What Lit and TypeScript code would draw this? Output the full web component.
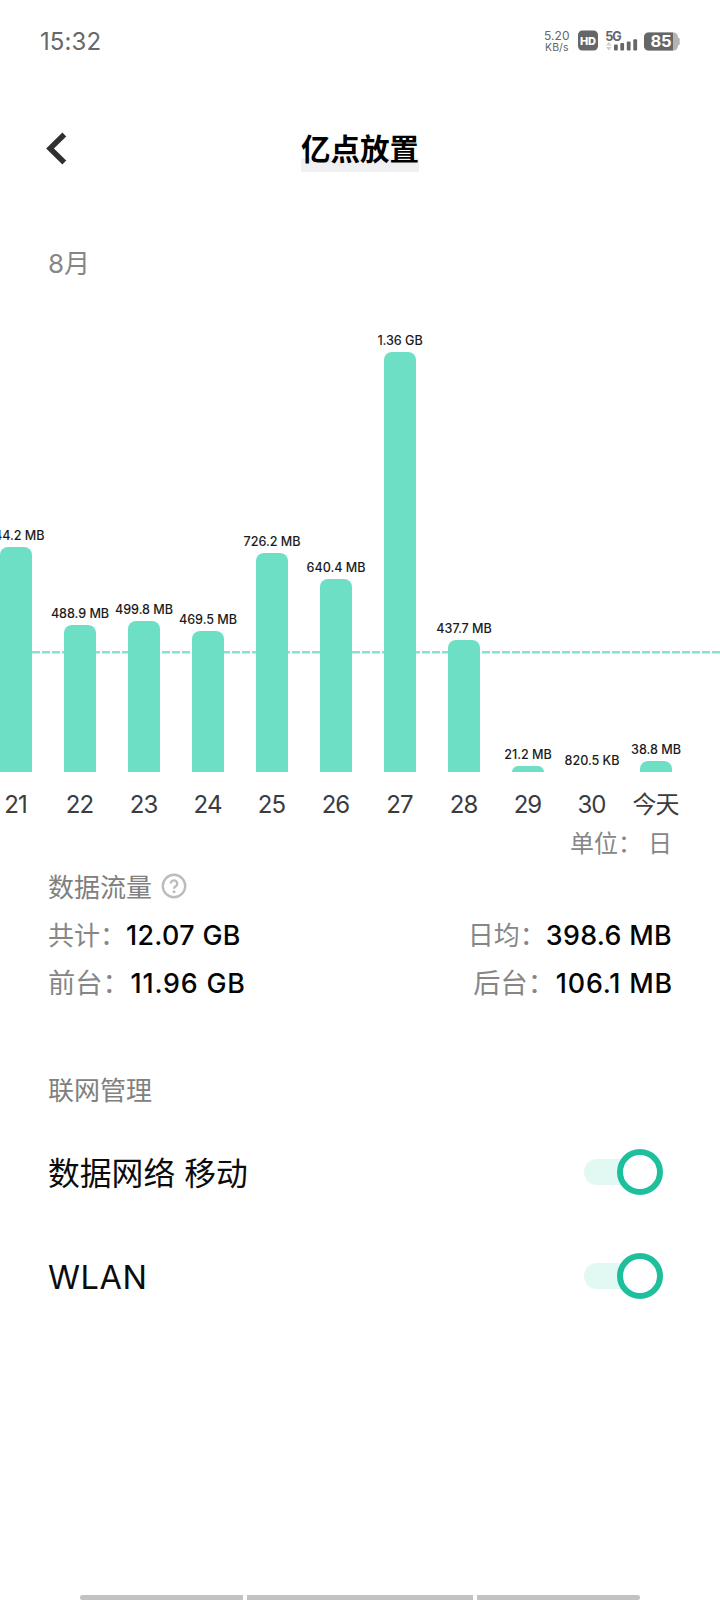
import { LitElement, html, css, svg } from "lit";
import { customElement, property } from "lit/decorators.js";

interface Day {
  day: string;
  usage: string;
  height: number;
}

const DAYS: Day[] = [
  { day: "21", usage: "744.2 MB", height: 225 },
  { day: "22", usage: "488.9 MB", height: 147.5 },
  { day: "23", usage: "499.8 MB", height: 151 },
  { day: "24", usage: "469.5 MB", height: 141.5 },
  { day: "25", usage: "726.2 MB", height: 219.5 },
  { day: "26", usage: "640.4 MB", height: 193.5 },
  { day: "27", usage: "1.36 GB", height: 420 },
  { day: "28", usage: "437.7 MB", height: 132 },
  { day: "29", usage: "21.2 MB", height: 6 },
  { day: "30", usage: "820.5 KB", height: 0 },
  { day: "今天", usage: "38.8 MB", height: 11.5 },
];

@customElement("status-bar")
class StatusBar extends LitElement {
  static styles = css`
    :host {
      display: flex;
      align-items: center;
      justify-content: space-between;
      height: 82px;
      padding: 0 40px;
      color: #686868;
    }
    .time { font-size: 24px; line-height: 30px; letter-spacing: 0.1px; padding: 2px 0 0 0; }
    .icons { display: block; font-family: "Inter", sans-serif; }
  `;
  render() {
    return html`
      <span class="time">15:32</span>
      <svg class="icons" width="138" height="26" viewBox="542 27.5 138 26" fill="#666">
        <text x="544" y="39.2" font-size="12" textLength="25.5">5.20</text>
        <text x="545" y="50" font-size="10.5" textLength="23.5">KB/s</text>
        <rect x="578" y="30" width="20" height="20" rx="4.5" />
        <text x="580" y="44.2" font-size="11" font-weight="800" fill="#fff" textLength="16">HD</text>
        <text x="605.3" y="40" font-size="12.6" font-weight="700" textLength="16.5">5G</text>
        <path d="M606 45l2.8-3.5 2.8 3.5zM606 46.5l2.8 3.5 2.8-3.5z" fill="#ccc" />
        ${[[614, 6], [620.3, 7.5], [626.8, 9], [633.3, 11.2]].map(
          ([x, h]) => svg`<rect x=${x} y=${50 - h} width="3.8" height=${h} rx="1" />`
        )}
        <rect x="644" y="32" width="34" height="18" rx="4.5" fill="#b4b4b4" />
        <rect x="676" y="37" width="3.7" height="8" rx="1.8" fill="#b4b4b4" />
        <path d="M648.5 32H673v18h-24.500a4.500 4.500 0 0 1-4.500-4.500v-9a4.500 4.500 0 0 1 4.500-4.500z" />
        <text x="650.6" y="46.9" font-size="16.5" font-weight="700" fill="#fff" textLength="21">85</text>
      </svg>
    `;
  }
}

@customElement("usage-chart")
class UsageChart extends LitElement {
  static styles = css`
    :host { display: block; overflow: hidden; }
    .plot {
      display: grid;
      grid-template-columns: repeat(11, 64px);
      margin-left: -16px;
      width: 736px;
      height: 472px;
      background: repeating-linear-gradient(90deg, #86e3d0 0 5.7px, transparent 5.7px 8px, #86e3d0 8px 10px) 0 351px / 100% 2.5px no-repeat;
    }
    .col { display: flex; flex-direction: column; align-items: center; justify-content: flex-end; }
    .usage {
      font-size: 12.6px;
      font-weight: 500;
      line-height: 16px;
      margin-bottom: 3px;
      white-space: nowrap;
      color: #1c1c1c;
      letter-spacing: -0.05px;
    }
    .bar { width: 32px; flex: none; background: #6cdfc5; border-radius: 8px 8px 0 0; }
    .days { display: grid; grid-template-columns: repeat(11, 64px); margin-left: -16px; }
    .day { text-align: center; font-size: 24px; line-height: 32px; padding: 17px 1px 0 0; color: #3c3c3c; letter-spacing: -0.9px; }
  `;
  render() {
    return html`
      <div class="plot">
        ${DAYS.map(
          (d) => html`<div class="col">
            <span class="usage">${d.usage}</span>
            <div class="bar" style="height:${d.height}px"></div>
          </div>`
        )}
      </div>
      <div class="days">${DAYS.map((d) => html`<span class="day">${d.day}</span>`)}</div>
    `;
  }
}

@customElement("toggle-row")
class ToggleRow extends LitElement {
  @property() label = "";
  static styles = css`
    :host { display: flex; align-items: center; justify-content: space-between; height: 104px; padding: 0 57px 0 48px; }
    .label { font-size: 32px; line-height: 40px; color: #0c0c0c; padding-top: 4px; }
    .label:lang(zh) { font-size: 31.8px; }
    .label:lang(en) { font-size: 32.5px; letter-spacing: 0.6px; }
    .switch { display: flex; align-items: center; }
    .track { width: 44px; height: 26px; border-radius: 13px 0 0 13px; background: #e2f9f3; }
    .knob { box-sizing: border-box; width: 46px; height: 46px; margin-left: -11px; border: 6px solid #1dbf9d; border-radius: 50%; background: #fff; }
  `;
  render() {
    return html`
      <span class="label">${this.label}</span>
      <span class="switch"><span class="track"></span><span class="knob"></span></span>
    `;
  }
}

@customElement("app-root")
class AppRoot extends LitElement {
  static styles = css`
    :host {
      display: flex;
      flex-direction: column;
      width: 720px;
      height: 1600px;
      overflow: hidden;
      background: #fff;
      font-family: "Inter", "Noto Sans CJK SC", sans-serif;
    }
    .header { display: grid; grid-template-columns: 140px 1fr 140px; align-items: center; height: 134px; }
    .back { margin-left: 44px; }
    .title {
      justify-self: center;
      font-size: 29.5px;
      font-weight: 600;
      line-height: 46px;
      color: #000;
      background: linear-gradient(#f0eff1, #f0eff1) 0 100% / 100% 14px no-repeat;
    }
    .month { height: 84px; padding: 32px 48px 0; box-sizing: border-box; font-size: 26px; line-height: 32px; color: #868686; }
    .unit { display: flex; justify-content: flex-end; gap: 6px; height: 40px; padding: 6.5px 48px 0; box-sizing: border-box; font-size: 24px; line-height: 32px; color: #868686; }
    .caption { display: flex; align-items: center; gap: 8.5px; padding: 0 48px; height: 48px; margin-bottom: 3px; font-size: 26px; color: #808080; }
    .help { padding-top: 1px; }
    .stat { display: flex; justify-content: space-between; padding: 0 48px; height: 47.5px; align-items: center; color: #868686; }
    .pair { display: flex; align-items: baseline; font-size: 26px; line-height: 40px; }
    .pair.wide { font-size: 27.2px; }
    .value { font-size: 26.8px; font-weight: 500; color: #050505; letter-spacing: 0.35px; }
    .wide .value { letter-spacing: 0.8px; padding-left: 1px; margin-right: -0.8px; }
    .manage { margin: 57px 0 8px; }
    .nav { display: flex; gap: 4px; justify-content: center; margin-top: auto; }
    .seg { height: 5px; background: #c2c2c2; flex: 0 0 163px; border-radius: 3px 0 0 3px; }
    .seg.mid { flex-basis: 226px; border-radius: 0; }
    .seg.end { border-radius: 0 3px 3px 0; }
  `;
  render() {
    return html`
      <status-bar></status-bar>
      <div class="header">
        <svg class="back" width="24" height="36" viewBox="44 131 24 36">
          <path d="M64.300 134.500L50 148.500l14.300 14" fill="none" stroke="#303030" stroke-width="5.4" />
        </svg>
        <span class="title">亿点放置</span>
      </div>
      <div class="month">8月</div>
      <usage-chart></usage-chart>
      <div class="unit"><span>单位：</span><span>日</span></div>
      <div class="caption">
        <span>数据流量</span>
        <svg class="help" width="26" height="26" viewBox="0 0 26 26" fill="none" stroke="#bcbcbc" stroke-width="2.4">
          <circle cx="13" cy="13" r="11.200" />
          <path d="M9.800 10.600a3.200 3.200 0 1 1 4.900 2.700c-1.200.7-1.700 1.200-1.700 2.500" />
          <circle cx="13" cy="18.700" r="1.500" fill="#bcbcbc" stroke="none" />
        </svg>
      </div>
      <div class="stat">
        <span class="pair">共计：<span class="value">12.07 GB</span></span>
        <span class="pair">日均：<span class="value">398.6 MB</span></span>
      </div>
      <div class="stat">
        <span class="pair wide">前台：<span class="value">11.96 GB</span></span>
        <span class="pair wide">后台：<span class="value">106.1 MB</span></span>
      </div>
      <div class="caption manage">联网管理</div>
      <toggle-row lang="zh" label="数据网络 移动"></toggle-row>
      <toggle-row lang="en" label="WLAN"></toggle-row>
      <div class="nav"><span class="seg"></span><span class="seg mid"></span><span class="seg end"></span></div>
    `;
  }
}
